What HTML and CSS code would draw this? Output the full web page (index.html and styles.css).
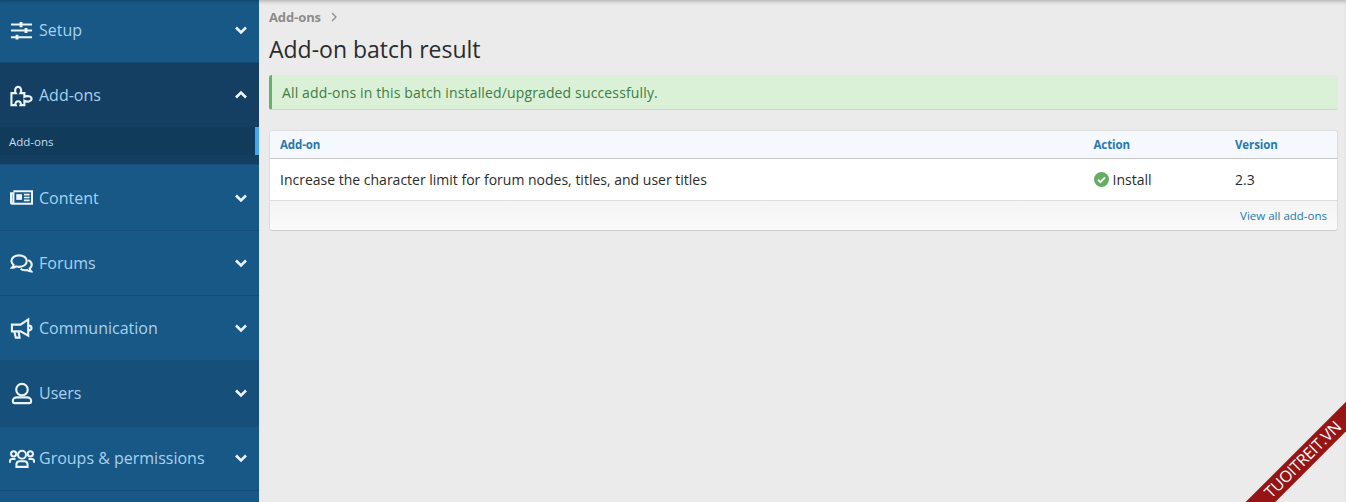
FILE: index.html
```html
<!DOCTYPE html>
<html lang="en">
<head>
    <meta charset="UTF-8">
    <title>Add-on batch result</title>
    <link rel="stylesheet" href="styles.css">
</head>
<body>
    <div class="page">
        <!-- Sidebar -->
        <nav class="side-nav">
            <div class="nav-section nav-setup">
                <a class="nav-head" href="#">
                    <svg class="nav-icon" viewBox="0 0 24 24"><path d="M1 5.700h22M1 12h22M1 19h22"/><path class="knob" d="M11.500 3v5.500M16.700 9.500v5M7.300 16.500v5"/></svg>
                    <span class="nav-label">Setup</span>
                    <svg class="nav-arrow" viewBox="0 0 14 10"><path d="M2 2.500l5 5 5-5"/></svg>
                </a>
            </div>
            <div class="nav-section nav-open">
                <a class="nav-head" href="#">
                    <svg class="nav-icon" viewBox="0 0 24 24"><path d="M1.500 9.500H6C4.500 7 5.500 3 8.500 3s4 4 2.500 6.500h4v4c2.500-1.500 7.500-1 7.500 2s-5 3.500-7.500 2V22h-4c1-2.500-.5-4-2.500-4s-3.500 1.500-2.500 4H1.500z"/></svg>
                    <span class="nav-label">Add-ons</span>
                    <svg class="nav-arrow" viewBox="0 0 14 10"><path d="M2 7.500l5-5 5 5"/></svg>
                </a>
                <a class="nav-sub" href="#">Add-ons</a>
            </div>
            <div class="nav-section nav-content">
                <a class="nav-head" href="#">
                    <svg class="nav-icon" viewBox="0 0 24 24"><path d="M3.500 5.500H23v13H2.500A1.500 1.500 0 0 1 1 17V7.500h2.500v10"/><path class="fill" d="M6.500 8.500h6v6h-6z"/><path class="thin" d="M14.500 9h6M14.500 12h6M14.500 15h6"/></svg>
                    <span class="nav-label">Content</span>
                    <svg class="nav-arrow" viewBox="0 0 14 10"><path d="M2 2.500l5 5 5-5"/></svg>
                </a>
            </div>
            <div class="nav-section">
                <a class="nav-head" href="#">
                    <svg class="nav-icon" viewBox="0 0 24 24"><path d="M9.500 3.500c4.500 0 8 2.500 8 6s-3.500 6-8 6c-1 0-2-.1-3-.5-1.200 1-2.800 1.500-4.500 1.500.8-.8 1.500-2 1.700-3C2.500 12.500 1.500 11 1.500 9.500c0-3.500 3.500-6 8-6z"/><path d="M19 8.500c2.300 1 3.700 2.800 3.700 4.800 0 1.500-.8 2.900-2.200 4 .2 1 .9 2.200 1.700 3-1.700 0-3.300-.5-4.500-1.500-2.500.6-5 .1-6.700-1.300"/></svg>
                    <span class="nav-label">Forums</span>
                    <svg class="nav-arrow" viewBox="0 0 14 10"><path d="M2 2.500l5 5 5-5"/></svg>
                </a>
            </div>
            <div class="nav-section">
                <a class="nav-head" href="#">
                    <svg class="nav-icon" viewBox="0 0 24 24"><path d="M2 8h9l8-5.500v17L11 15H2z"/><path d="M4.500 15l1.500 6.500h4L9 15"/><path d="M19 9c2.500 0 3.500 1.500 3.500 2.500S21.500 14 19 14"/></svg>
                    <span class="nav-label">Communication</span>
                    <svg class="nav-arrow" viewBox="0 0 14 10"><path d="M2 2.500l5 5 5-5"/></svg>
                </a>
            </div>
            <div class="nav-section nav-users">
                <a class="nav-head" href="#">
                    <svg class="nav-icon" viewBox="0 0 24 24"><circle cx="12.500" cy="8" r="6"/><path d="M7 16h11c2 0 4 1.500 4 3.500v1c0 1-1 1.500-1.500 1.500h-16C4 22 3 21.500 3 20.500v-1C3 17.500 5 16 7 16z"/></svg>
                    <span class="nav-label">Users</span>
                    <svg class="nav-arrow" viewBox="0 0 14 10"><path d="M2 2.500l5 5 5-5"/></svg>
                </a>
            </div>
            <div class="nav-section nav-groups">
                <a class="nav-head" href="#">
                    <svg class="nav-icon wide" viewBox="0 0 28 24"><circle cx="14" cy="8" r="4.300"/><circle cx="5" cy="7" r="2.800"/><circle cx="23" cy="7" r="2.800"/><path d="M8 21v-2.500c0-2 1.500-3.500 3.500-3.500h5c2 0 3.500 1.500 3.500 3.500V21z"/><path d="M1 16.500v-1.500C1 13.500 2.200 12.500 3.500 12.500H7M27 16.500v-1.500c0-1.500-1.200-2.500-2.500-2.500H21"/></svg>
                    <span class="nav-label">Groups &amp; permissions</span>
                    <svg class="nav-arrow" viewBox="0 0 14 10"><path d="M2 2.500l5 5 5-5"/></svg>
                </a>
            </div>
        </nav>

        <!-- Contenido -->
        <main class="main">
            <div class="breadcrumb">
                <a href="#">Add-ons</a>
                <svg class="crumb-sep" viewBox="0 0 8 10"><path d="M2 1l4 4-4 4"/></svg>
            </div>
            <h1 class="page-title">Add-on batch result</h1>
            <div class="message-success">All add-ons in this batch installed/upgraded successfully.</div>

            <div class="block">
                <div class="block-row block-head">
                    <div class="col-name">Add-on</div>
                    <div class="col-action">Action</div>
                    <div class="col-version">Version</div>
                </div>
                <div class="block-row block-body">
                    <div class="col-name">Increase the character limit for forum nodes, titles, and user titles</div>
                    <div class="col-action">
                        <svg class="check-icon" viewBox="0 0 16 16"><circle cx="8" cy="8" r="8"/><path d="M4.300 8.300l2.500 2.500 4.900-4.900"/></svg>
                        Install
                    </div>
                    <div class="col-version">2.3</div>
                </div>
                <div class="block-foot"><a href="#">View all add-ons</a></div>
            </div>
        </main>
    </div>

    <div class="corner">
        <div class="ribbon">TUOITREIT.VN</div>
    </div>
</body>
</html>
```

FILE: styles.css
```css
* {
    box-sizing: border-box;
    margin: 0;
    padding: 0;
}

html,
body {
    height: 100%;
    overflow: hidden;
}

body {
    font-family: 'Open Sans', 'Noto Sans', sans-serif;
    font-size: 14px;
    background: #ebebeb;
    color: #222;
}

a {
    text-decoration: none;
}

.page {
    display: flex;
    height: 100%;
}

/* Sidebar */
.side-nav {
    flex: 0 0 259px;
    background: #185886;
    display: flex;
    flex-direction: column;
}

.nav-section {
    height: 65px;
    border-bottom: 1px solid #154e78;
}

.nav-head {
    display: flex;
    align-items: center;
    height: 64px;
    padding: 0 11.500px 0 10px;
    color: #a8d1ef;
    font-size: 16px;
}

.nav-icon {
    flex: 0 0 23px;
    width: 23px;
    height: 23px;
    margin-right: 6px;
    fill: none;
    stroke: #ebf4fb;
    stroke-width: 2.200;
}

.nav-icon.wide {
    flex-basis: 26px;
    width: 26px;
    margin: 0 4px 0 -1px;
}

.nav-icon .fill {
    fill: #ebf4fb;
    stroke: none;
}

.nav-icon .thin {
    stroke-width: 1.600;
}

.nav-icon .knob {
    stroke-width: 3;
}

.nav-label {
    flex: 1;
}

.nav-arrow {
    width: 14px;
    height: 10px;
    fill: none;
    stroke: #ebf4fb;
    stroke-width: 2.600;
}

.nav-setup {
    height: 63px;
    border-bottom: 1px solid #154a72;
    box-shadow: inset 0 3px 3px -2px rgba(0, 0, 0, 0.25);
}

.nav-setup .nav-head {
    height: 62px;
    padding-bottom: 2px;
}

.nav-open {
    height: 102px;
    background: #143f62;
    border-bottom: 0;
    box-shadow: inset 0 -1px 0 #174c74;
}

.nav-sub {
    display: block;
    height: 28px;
    line-height: 29px;
    padding-left: 9px;
    background: #103b5b;
    color: #c3dff3;
    font-size: 11.500px;
    border-right: 4px solid #47a7eb;
}

.nav-content {
    height: 66px;
}

.nav-content .nav-head {
    height: 65px;
}

.nav-users {
    height: 66px;
    background: #174f7b;
    border-bottom: 0;
}

.nav-groups {
    height: 64px;
}

.nav-groups .nav-head {
    height: 63px;
    padding-bottom: 1px;
}

/* Main */
.main {
    flex: 1;
    padding: 8px 8px 0 10px;
    box-shadow: inset 0 4px 4px -3px rgba(0, 0, 0, 0.3);
}

.breadcrumb {
    display: flex;
    align-items: center;
    height: 18px;
    line-height: 18px;
    font-size: 13px;
    font-weight: 700;
    letter-spacing: -0.1px;
}

.breadcrumb a {
    color: #8c8c8c;
}

.crumb-sep {
    width: 8px;
    height: 10px;
    margin-left: 9px;
    fill: none;
    stroke: #8c8c8c;
    stroke-width: 1.300;
}

.page-title {
    margin-top: 7px;
    height: 42px;
    font-size: 23px;
    font-weight: 400;
    line-height: 32px;
    color: #2b2b2b;
}

.message-success {
    height: 35px;
    line-height: 35px;
    padding-left: 10px;
    background: #daf1d8;
    color: #3f7c42;
    border-left: 3px solid #63b265;
    border-bottom: 1px solid #c9d9c7;
    border-radius: 3px;
    letter-spacing: 0.14px;
}

.block {
    margin-top: 20px;
    background: #fff;
    border: 1px solid #dcdcdc;
    border-bottom-color: #cbcbcb;
    border-radius: 4px;
    overflow: hidden;
}

.block-row {
    display: flex;
    align-items: center;
    padding-left: 10px;
}

.col-name {
    flex: 0 0 813.500px;
}

.col-action {
    flex: 0 0 141.500px;
    display: flex;
    align-items: center;
}

.block-head {
    height: 28px;
    background: #f5f9fe;
    border-bottom: 1px solid #c8c8c8;
    color: #2577b1;
    font-size: 11.500px;
    font-weight: 700;
    letter-spacing: -0.1px;
}

.block-body {
    height: 42px;
    border-bottom: 1px solid #dedede;
    color: #2b2b2b;
}

.check-icon {
    width: 15px;
    height: 15px;
    margin-right: 4px;
    fill: #63ad63;
    stroke: none;
}

.check-icon path {
    fill: none;
    stroke: #fff;
    stroke-width: 2;
}

.block-foot {
    height: 29px;
    line-height: 29px;
    padding-right: 10px;
    text-align: right;
    background: linear-gradient(#f4f4f4, #fafafa);
    font-size: 11.500px;
}

.block-foot a {
    color: #2577b1;
}

/* Cinta de la esquina */
.corner {
    position: absolute;
    right: 0;
    bottom: 0;
    width: 110px;
    height: 110px;
    overflow: hidden;
}

.ribbon {
    position: absolute;
    left: -33px;
    top: 57px;
    width: 200px;
    height: 21px;
    line-height: 21px;
    text-align: center;
    background: #961414;
    color: #fff;
    font-size: 16px;
    letter-spacing: -0.3px;
    transform: rotate(-45deg);
}
```
